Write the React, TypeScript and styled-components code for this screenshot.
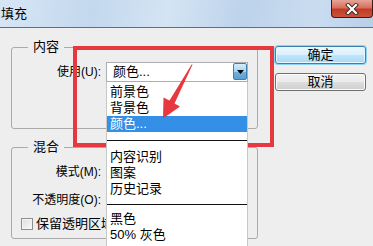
import React from 'react';
import styled, { createGlobalStyle } from 'styled-components';

const Global = createGlobalStyle`
  html, body { margin: 0; padding: 0; background: #eeeeee; }
  body {
    font-family: "Liberation Sans", "Noto Sans CJK SC", sans-serif;
    font-size: 12px;
    color: #000;
  }
`;

const Window = styled.div`
  position: relative;
  width: 373px;
  height: 246px;
  overflow: hidden;
  background: #eeeeee;
`;

const TitleBar = styled.div`
  height: 27px;
  border-bottom: 1px solid #5f6f80;
  display: flex;
  justify-content: space-between;
  align-items: flex-start;
  background: linear-gradient(100deg, #d7e6f5 0%, #c3d8ee 25%, #d4e4f4 45%, #bdd3eb 65%, #cadcf0 85%, #b9cfe8 100%);
`;

const Title = styled.div`
  padding: 6px 0 0 1px;
  font-size: 13px;
  line-height: 16px;
`;

const CloseBtn = styled.div`
  width: 42px;
  height: 18px;
  box-sizing: border-box;
  border: 1px solid #3e1a14;
  border-top: none;
  border-radius: 0 0 4px 4px;
  background: linear-gradient(#e6a497 0%, #d7705f 45%, #c23a23 55%, #c9543b 100%);
  display: flex;
  align-items: center;
  justify-content: center;
`;

const Body = styled.div`
  display: flex;
  gap: 17px;
  padding: 11px 0 0 11px;
`;

const LeftCol = styled.div`
  display: flex;
  flex-direction: column;
  gap: 10px;
  width: 247px;
`;

const Group = styled.fieldset<{ $h: number }>`
  margin: 0;
  padding: 7px 8px 0 0;
  min-width: 0;
  height: ${(p) => p.$h}px;
  box-sizing: border-box;
  border: 1px solid #aaaaaa;
  border-radius: 3px;
  display: flex;
  flex-direction: column;
`;

const Legend = styled.legend`
  margin-left: 16px;
  padding: 0 5px;
  font-size: 13px;
  line-height: 16px;
`;

const Row = styled.div<{ $mt?: number }>`
  display: flex;
  align-items: center;
  height: 20px;
  margin-top: ${(p) => p.$mt ?? 0}px;
`;

const Label = styled.div`
  width: 89px;
  text-align: right;
  margin-right: 5px;
  font-size: 12px;
  line-height: 16px;
  white-space: nowrap;
`;

const Combo = styled.div`
  position: relative;
  width: 142px;
  height: 20px;
  box-sizing: border-box;
  border: 1px solid #abadb3;
  background: #fff;
  display: flex;
  align-items: stretch;
`;

const ComboText = styled.div`
  flex: 1;
  padding-left: 6px;
  font-size: 13px;
  line-height: 18px;
`;

const ArrowBtn = styled.div`
  width: 14px;
  margin: 0 0 1px;
  box-sizing: border-box;
  border: 1px solid #3c7fb1;
  border-radius: 2px;
  background: linear-gradient(#d7ecf8 0%, #a9d3ef 50%, #6fb0de 51%, #5e9fce 100%);
  display: flex;
  align-items: center;
  justify-content: center;
`;

const List = styled.div`
  position: absolute;
  left: -1px;
  top: 19px;
  width: 142px;
  height: 180px;
  box-sizing: border-box;
  border-left: 1px solid #c8c8c8;
  border-right: 1px solid #c8c8c8;
  background: #fff;
  padding-top: 2px;
  z-index: 2;
`;

const Item = styled.div<{ $sel?: boolean }>`
  height: 16px;
  line-height: 16px;
  padding-left: 3px;
  font-size: 13px;
  white-space: nowrap;
  background: ${(p) => (p.$sel ? '#3390e6' : 'transparent')};
  color: ${(p) => (p.$sel ? '#fff' : '#000')};
`;

const Sep = styled.div<{ $above: number; $below: number }>`
  margin: ${(p) => p.$above}px 0 ${(p) => p.$below}px;
  height: 1px;
  background: #111;
`;

const CheckRow = styled.div`
  display: flex;
  align-items: center;
  gap: 3px;
  margin: 6px 0 0 9px;
  height: 16px;
  white-space: nowrap;
`;

const Check = styled.div`
  width: 12px;
  height: 12px;
  box-sizing: border-box;
  border: 1px solid #8e8f8f;
  background: linear-gradient(135deg, #dcdcdc, #fbfbfb);
  box-shadow: inset 0 0 0 1px #f4f4f4;
`;

const CheckText = styled.div`
  width: 70px;
  overflow: hidden;
  font-size: 13px;
  line-height: 16px;
`;

const ButtonCol = styled.div`
  display: flex;
  flex-direction: column;
  gap: 9px;
  padding-top: 7px;
`;

const Button = styled.div<{ $def?: boolean }>`
  width: 91px;
  height: 18px;
  box-sizing: border-box;
  border-radius: 3px;
  border: 1px solid ${(p) => (p.$def ? '#3c7fb1' : '#707070')};
  background: ${(p) =>
    p.$def
      ? 'linear-gradient(#eaf6fd 0%, #d9f0fc 50%, #bee6fd 51%, #a7d9f5 100%)'
      : 'linear-gradient(#f2f2f2 0%, #ebebeb 50%, #dddddd 51%, #cfcfcf 100%)'};
  box-shadow: ${(p) => (p.$def ? '0 0 0 1px #8fd3f2, inset 0 0 0 1px #e8f7ff' : 'inset 0 0 0 1px #fbfbfb')};
  text-align: center;
  font-size: 13px;
  line-height: 16px;
`;

const RedBox = styled.div`
  position: absolute;
  left: 73px;
  top: 46px;
  width: 201px;
  height: 101px;
  box-sizing: border-box;
  border: 4px solid #e8383f;
  z-index: 1;
`;

const Overlay = styled.svg`
  position: absolute;
  left: 0;
  top: 0;
  z-index: 3;
  pointer-events: none;
`;

export default function App() {
  return (
    <Window>
      <Global />
      <TitleBar>
        <Title>填充</Title>
        <CloseBtn>
          <svg width="14" height="12" viewBox="0 0 14 12">
            <path d="M3 2 L11 10 M11 2 L3 10" stroke="#3a2a28" strokeWidth="4" strokeLinecap="square" />
            <path d="M3 2 L11 10 M11 2 L3 10" stroke="#ffffff" strokeWidth="2.2" strokeLinecap="square" />
          </svg>
        </CloseBtn>
      </TitleBar>
      <Body>
        <LeftCol>
          <Group $h={90}>
            <Legend>内容</Legend>
            <Row>
              <Label>使用(U):</Label>
              <Combo>
                <ComboText>颜色...</ComboText>
                <ArrowBtn>
                  <svg width="7" height="4" viewBox="0 0 7 4">
                    <path d="M0 0 L7 0 L3.5 4 Z" fill="#000" />
                  </svg>
                </ArrowBtn>
                <List>
                  <Item>前景色</Item>
                  <Item>背景色</Item>
                  <Item $sel>颜色...</Item>
                  <Sep $above={8} $below={8} />
                  <Item>内容识别</Item>
                  <Item>图案</Item>
                  <Item>历史记录</Item>
                  <Sep $above={7} $below={6} />
                  <Item>黑色</Item>
                  <Item>50% 灰色</Item>
                </List>
              </Combo>
            </Row>
          </Group>
          <Group $h={100}>
            <Legend>混合</Legend>
            <Row>
              <Label>模式(M):</Label>
            </Row>
            <Row $mt={8}>
              <Label>不透明度(O):</Label>
            </Row>
            <CheckRow>
              <Check />
              <CheckText>保留透明区域</CheckText>
            </CheckRow>
          </Group>
        </LeftCol>
        <ButtonCol>
          <Button $def>确定</Button>
          <Button>取消</Button>
        </ButtonCol>
      </Body>
      <RedBox />
      <Overlay width="373" height="246" viewBox="0 0 373 246">
        <polygon points="192.6,64.5 191.6,64.5 169.5,100.5 163.5,97.5 163,118.5 180,106.5 174.5,103.5" fill="#e8383f" />
      </Overlay>
    </Window>
  );
}
